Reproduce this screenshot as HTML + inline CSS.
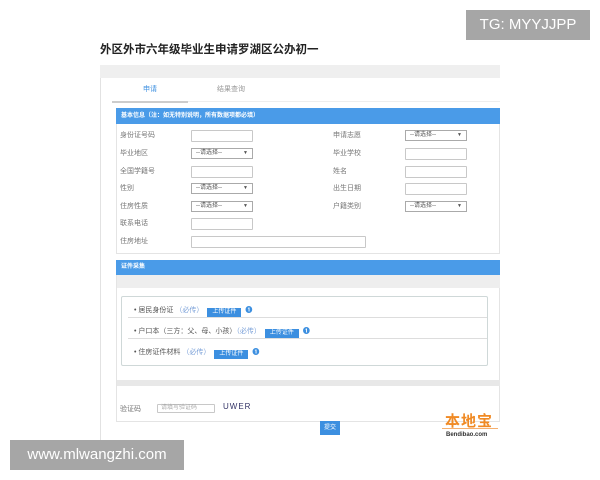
<!DOCTYPE html>
<html><head><meta charset="utf-8"><style>
*{margin:0;padding:0;box-sizing:border-box}
body{width:600px;height:480px;background:#fff;position:relative;overflow:hidden;font-family:"Liberation Sans","Noto Sans CJK SC",sans-serif;color:#666}
.a{position:absolute}
.t{font-size:7px;color:#777;white-space:nowrap}
.in{position:absolute;border:1px solid #c8c8c8;height:12px;background:#fff;border-radius:1px}
.sel{position:absolute;border:1px solid #aaa;height:11px;width:62px;background:#fff;font-size:6px;color:#555;line-height:9px;padding-left:4px}
.sel:after{content:"▼";position:absolute;right:4px;font-size:5px}
.up{display:inline-block;background:#3c8fe0;color:#fff;font-size:6px;padding:0 5px;height:9px;line-height:9px;vertical-align:-1px;margin-left:4px}
.i{display:inline-block;color:#3c8fe0;font-size:7px;font-weight:bold;margin-left:4px}
</style></head><body>
<div class="a" style="left:466px;top:10px;width:124px;height:30px;background:#a6a6a6;color:#fff;font-size:15px;line-height:30px;text-align:center">TG: MYYJJPP</div>
<div class="a" style="left:100px;top:41px;font-size:11.5px;font-weight:bold;color:#222">外区外市六年级毕业生申请罗湖区公办初一</div>
<div class="a" style="left:100px;top:65px;width:400px;height:13px;background:#efefef"></div>
<div class="a" style="left:100px;top:78px;width:1px;height:365px;background:#e2e2e2"></div>
<div class="a t" style="left:143px;top:84px;color:#3c8fe0">申请</div>
<div class="a t" style="left:217px;top:84px;color:#999">结果查询</div>
<div class="a" style="left:112px;top:101px;width:388px;height:1px;background:#eee"></div>
<div class="a" style="left:112px;top:101px;width:76px;height:2px;background:#ccc"></div>
<div class="a" style="left:116px;top:108px;width:384px;height:146px;border:1px solid #e4e4e4;border-top:none"></div>
<div class="a" style="left:116px;top:108px;width:384px;height:16px;background:#4a9be8;color:#fff;font-size:6px;line-height:16px;padding-left:5px;font-weight:bold">基本信息（注：如无特别说明，所有数据项都必填）</div>
<div class="a t" style="left:120px;top:130px">身份证号码</div><div class="in" style="left:191px;top:130px;width:62px"></div>
<div class="a t" style="left:333px;top:130px">申请志愿</div><div class="sel" style="left:405px;top:130px">--请选择--</div>
<div class="a t" style="left:120px;top:148px">毕业地区</div><div class="sel" style="left:191px;top:148px">--请选择--</div>
<div class="a t" style="left:333px;top:148px">毕业学校</div><div class="in" style="left:405px;top:148px;width:62px"></div>
<div class="a t" style="left:120px;top:166px">全国学籍号</div><div class="in" style="left:191px;top:166px;width:62px"></div>
<div class="a t" style="left:333px;top:166px">姓名</div><div class="in" style="left:405px;top:166px;width:62px"></div>
<div class="a t" style="left:120px;top:183px">性别</div><div class="sel" style="left:191px;top:183px">--请选择--</div>
<div class="a t" style="left:333px;top:183px">出生日期</div><div class="in" style="left:405px;top:183px;width:62px"></div>
<div class="a t" style="left:120px;top:201px">住房性质</div><div class="sel" style="left:191px;top:201px">--请选择--</div>
<div class="a t" style="left:333px;top:201px">户籍类别</div><div class="sel" style="left:405px;top:201px">--请选择--</div>
<div class="a t" style="left:120px;top:218px">联系电话</div><div class="in" style="left:191px;top:218px;width:62px"></div>
<div class="a t" style="left:120px;top:236px">住房地址</div><div class="in" style="left:191px;top:236px;width:175px"></div>
<div class="a" style="left:116px;top:260px;width:384px;height:162px;border:1px solid #e4e4e4"></div>
<div class="a" style="left:116px;top:260px;width:384px;height:15px;background:#4a9be8;color:#fff;font-size:6px;line-height:15px;padding-left:5px;font-weight:bold">证件采集</div>
<div class="a" style="left:117px;top:275px;width:383px;height:13px;background:#eeeeee"></div>
<div class="a" style="left:121px;top:296px;width:367px;height:70px;border:1px solid #cfd8d8;border-radius:2px"></div>
<div class="a" style="left:128px;top:317px;width:359px;height:1px;background:#ddd"></div>
<div class="a" style="left:128px;top:338px;width:359px;height:1px;background:#ddd"></div>
<div class="a t" style="left:134px;top:305px;color:#555">• 居民身份证 <span style="color:#7aa0d8">（必传）</span><span class="up">上传证件</span><span class="i">❶</span></div>
<div class="a t" style="left:134px;top:326px;color:#555">• 户口本（三方：父、母、小孩）<span style="color:#7aa0d8">（必传）</span><span class="up">上传证件</span><span class="i">❶</span></div>
<div class="a t" style="left:134px;top:347px;color:#555">• 住房证件材料 <span style="color:#7aa0d8">（必传）</span><span class="up">上传证件</span><span class="i">❶</span></div>
<div class="a" style="left:117px;top:380px;width:383px;height:6px;background:#e8e8e8"></div>
<div class="a t" style="left:120px;top:404px">验证码</div>
<div class="in" style="left:157px;top:404px;width:58px;height:9px;font-size:6px;color:#aaa;line-height:7px;padding-left:3px">请填写验证码</div>
<div class="a" style="left:223px;top:402px;font-size:8px;color:#336;letter-spacing:1px">UWER</div>
<div class="a" style="left:320px;top:421px;width:20px;height:14px;background:#3c8fe0;color:#fff;font-size:6px;line-height:14px;text-align:center">提交</div>
<div class="a" style="left:445px;top:410px;font-size:15px;font-weight:bold;color:#f08a24;letter-spacing:1px">本地宝</div>
<div class="a" style="left:442px;top:428px;width:56px;height:1px;background:#f5b070"></div>
<div class="a" style="left:446px;top:432px;font-size:6px;font-weight:bold;color:#333">Bendibao.com</div>
<div class="a" style="left:10px;top:440px;width:174px;height:30px;background:#a6a6a6;color:#fff;font-size:15px;line-height:30px;text-align:center">www.mlwangzhi.com</div>
</body></html>
